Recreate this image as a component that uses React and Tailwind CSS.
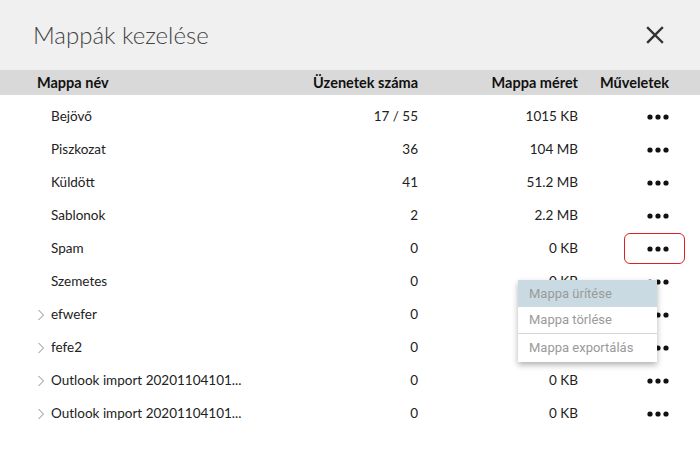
import React from 'react';

const rows = [
  { name: 'Bejövő', count: '17 / 55', size: '1015 KB' },
  { name: 'Piszkozat', count: '36', size: '104 MB' },
  { name: 'Küldött', count: '41', size: '51.2 MB' },
  { name: 'Sablonok', count: '2', size: '2.2 MB' },
  { name: 'Spam', count: '0', size: '0 KB', focused: true },
  { name: 'Szemetes', count: '0', size: '0 KB' },
  { name: 'efwefer', count: '0', size: '0 KB', children: true },
  { name: 'fefe2', count: '0', size: '0 KB', children: true },
  { name: 'Outlook import 20201104101...', count: '0', size: '0 KB', children: true },
  { name: 'Outlook import 20201104101...', count: '0', size: '0 KB', children: true },
];

function Dots() {
  return (
    <svg width="22" height="6" viewBox="0 0 22 6" fill="#111">
      <circle cx="3" cy="3" r="2.6" />
      <circle cx="11" cy="3" r="2.6" />
      <circle cx="19" cy="3" r="2.6" />
    </svg>
  );
}

function Chevron() {
  return (
    <svg width="8" height="12" viewBox="0 0 8 12" fill="none" stroke="#8a8a8a" strokeWidth="1">
      <path d="M1.5 1l5 5-5 5" />
    </svg>
  );
}

export default function App() {
  return (
    <div className="relative w-[700px] h-[463px] bg-white overflow-hidden" style={{ fontFamily: 'Lato, "Open Sans", sans-serif' }}>
      {/* Header */}
      <div className="h-[70px] bg-[#f0f0f0] flex items-center justify-between pl-[33px] pr-[34px]">
        <h1 className="text-[24px] font-light text-[#444] leading-none">Mappák kezelése</h1>
        <button className="w-[22px] h-[22px] flex items-center justify-center">
          <svg width="20" height="20" viewBox="0 0 20 20" stroke="#333" strokeWidth="2.4" strokeLinecap="square">
            <path d="M3 3l14 14M17 3L3 17" />
          </svg>
        </button>
      </div>

      {/* Table header */}
      <div className="h-[25px] bg-[#d9d9d9] grid grid-cols-[263px_118px_160px_1fr] items-center pl-[37px] text-[14.5px] font-bold text-[#111]">
        <div>Mappa név</div>
        <div className="text-right">Üzenetek száma</div>
        <div className="text-right">Mappa méret</div>
        <div className="pl-[22px]">Műveletek</div>
      </div>

      {/* Rows */}
      <div className="pt-[5px]">
        {rows.map((r, i) => (
          <div key={i} className="h-[33px] grid grid-cols-[263px_118px_160px_1fr] items-center pl-[37px] text-[13.5px] text-[#222]">
            <div className="flex items-center">
              <span className="w-[14px] flex items-center">{r.children && <Chevron />}</span>
              <span>{r.name}</span>
            </div>
            <div className="text-right">{r.count}</div>
            <div className="text-right">{r.size}</div>
            <div className="pl-[46px] flex items-center">
              <button className={`w-[61px] h-[31px] flex items-center justify-center pl-[6px] rounded-[6px] ${r.focused ? 'border border-[#e02020]' : 'border border-transparent'}`}>
                <Dots />
              </button>
            </div>
          </div>
        ))}
      </div>

      {/* Context menu */}
      <div className="absolute left-[518px] top-[280px] w-[139px] bg-white shadow-[0_3px_6px_rgba(0,0,0,0.3)] text-[13px] text-[#9a9a9a]" style={{ fontFamily: 'Roboto, Arial, sans-serif' }}>
        <div className="h-[27px] flex items-center px-[11px] bg-[#c9dae3]">Mappa ürítése</div>
        <div className="h-[27px] flex items-center px-[11px] border-b border-[#d6d6d6]">Mappa törlése</div>
        <div className="h-[28px] flex items-center px-[11px]">Mappa exportálás</div>
      </div>
    </div>
  );
}
